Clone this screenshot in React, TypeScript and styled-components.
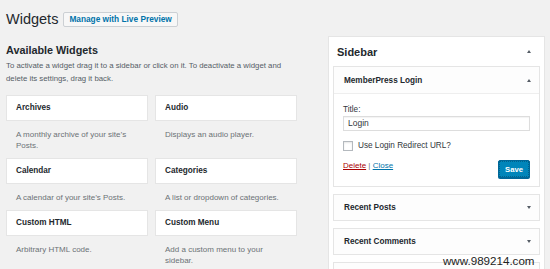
import React from "react";
import styled, { createGlobalStyle } from "styled-components";

const GlobalStyle = createGlobalStyle`
  html, body {
    margin: 0;
    background: #f1f1f1;
    font-family: "Liberation Sans", Arial, Helvetica, sans-serif;
    color: #23282d;
  }
`;

const Page = styled.div`
  position: relative;
  display: flex;
  align-items: flex-start;
  box-sizing: border-box;
  height: 269px;
  padding: 10px 5px 0 6px;
  overflow: hidden;
`;

const LeftColumn = styled.div`
  width: 291px;
  flex-shrink: 0;
`;

const HeaderRow = styled.div`
  display: flex;
  align-items: center;
  gap: 5px;
  height: 18px;
`;

const PageTitle = styled.h1`
  margin: 0;
  font-size: 14.5px;
  font-weight: 400;
  line-height: 18px;
  color: #23282d;
`;

const ManageButton = styled.button`
  box-sizing: border-box;
  height: 15px;
  padding: 0 5px;
  border: 1px solid #ccd0d4;
  border-radius: 2px;
  background: #f7f7f7;
  color: #0073aa;
  font-family: inherit;
  font-size: 8.3px;
  font-weight: 700;
  line-height: 13px;
`;

const SectionTitle = styled.h2`
  margin: 15px 0 0;
  font-size: 10.8px;
  font-weight: 700;
  line-height: 14px;
  color: #23282d;
`;

const Intro = styled.p`
  margin: 2px 0 9px;
  font-size: 7.8px;
  line-height: 13.3px;
  color: #555d66;
`;

const WidgetGrid = styled.div`
  display: grid;
  grid-template-columns: 142px 142px;
  column-gap: 7px;
`;

const WidgetCard = styled.div`
  box-sizing: border-box;
  height: 26px;
  padding: 0 9px;
  border: 1px solid #e5e5e5;
  background: #fff;
  font-size: 8.2px;
  font-weight: 700;
  line-height: 24px;
  color: #23282d;
`;

const WidgetDesc = styled.div`
  padding: 8px 10px 7px;
  font-size: 8px;
  line-height: 11px;
  color: #6c7176;
`;

const SidebarPanel = styled.section`
  box-sizing: border-box;
  width: 217px;
  margin: 26px 0 0 31px;
  flex-shrink: 0;
  border: 1px solid #e5e5e5;
  background: #fff;
`;

const PanelHeader = styled.div`
  display: flex;
  align-items: center;
  justify-content: space-between;
  height: 29px;
  padding: 0 13px 0 8px;
`;

const PanelTitle = styled.h3`
  margin: 0;
  font-size: 11px;
  font-weight: 700;
  color: #23282d;
`;

const PanelBody = styled.div`
  display: flex;
  flex-direction: column;
  gap: 7px;
  padding: 0 4px;
`;

const WidgetBox = styled.div`
  box-sizing: border-box;
  border: 1px solid #e5e5e5;
  background: #fdfdfd;
`;

const WidgetBoxHeader = styled.div<{ $open?: boolean }>`
  display: flex;
  align-items: center;
  justify-content: space-between;
  height: ${(p) => (p.$open ? "26px" : "25px")};
  padding: 0 8px 0 10px;
  border-bottom: ${(p) => (p.$open ? "1px solid #eee" : "none")};
  font-size: 8.2px;
  font-weight: 700;
  color: #23282d;
`;

const Arrow = styled.span<{ $up?: boolean }>`
  width: 0;
  height: 0;
  border-left: 2.5px solid transparent;
  border-right: 2.5px solid transparent;
  ${(p) =>
    p.$up ? "border-bottom: 3px solid #555d66;" : "border-top: 3px solid #555d66;"}
`;

const WidgetForm = styled.div`
  padding: 10px 9px 8px;
  background: #fff;
`;

const FieldLabel = styled.label`
  display: block;
  font-size: 8.2px;
  line-height: 11px;
  color: #32373c;
`;

const TextInput = styled.div`
  box-sizing: border-box;
  height: 15px;
  margin-top: 1px;
  padding: 0 4px;
  border: 1px solid #ddd;
  box-shadow: inset 0 1px 1px rgba(0, 0, 0, 0.05);
  background: #fff;
  font-size: 8.5px;
  line-height: 13px;
  color: #32373c;
`;

const CheckRow = styled.div`
  display: flex;
  align-items: center;
  gap: 5px;
  margin-top: 9px;
  font-size: 8.2px;
  line-height: 11px;
  color: #32373c;
`;

const CheckBox = styled.span`
  box-sizing: border-box;
  width: 10px;
  height: 10px;
  border: 1px solid #b4b9be;
  box-shadow: inset 0 1px 2px rgba(0, 0, 0, 0.1);
  background: #fff;
`;

const ActionRow = styled.div`
  display: flex;
  align-items: flex-start;
  justify-content: space-between;
  margin-top: 9px;
`;

const Links = styled.div`
  font-size: 8px;
  line-height: 11px;
  color: #72777c;
`;

const ActionLink = styled.a<{ $danger?: boolean }>`
  color: ${(p) => (p.$danger ? "#a00" : "#0073aa")};
  text-decoration: underline;
`;

const SaveButton = styled.button`
  box-sizing: border-box;
  width: 32px;
  height: 18px;
  padding: 0;
  border: 1px solid #006799;
  border-radius: 2px;
  background: #0085ba;
  box-shadow: 0 1px 0 #006799;
  outline: 1px dotted rgba(0, 0, 0, 0.25);
  outline-offset: -2px;
  color: #fff;
  font-family: inherit;
  font-size: 7.7px;
  font-weight: 700;
`;

const Watermark = styled.div`
  position: absolute;
  left: 443px;
  top: 254px;
  font-size: 11.6px;
  line-height: 14px;
  color: #222;
`;

const widgets = [
  { title: "Archives", desc: "A monthly archive of your site’s Posts." },
  { title: "Audio", desc: "Displays an audio player." },
  { title: "Calendar", desc: "A calendar of your site’s Posts." },
  { title: "Categories", desc: "A list or dropdown of categories." },
  { title: "Custom HTML", desc: "Arbitrary HTML code." },
  { title: "Custom Menu", desc: "Add a custom menu to your sidebar." },
];

// the last box is only partly in view, its title falls below the fold
const closedWidgets = ["Recent Posts", "Recent Comments", ""];

function App() {
  return (
    <>
      <GlobalStyle />
      <Page>
        <LeftColumn>
          <HeaderRow>
            <PageTitle>Widgets</PageTitle>
            <ManageButton>Manage with Live Preview</ManageButton>
          </HeaderRow>
          <SectionTitle>Available Widgets</SectionTitle>
          <Intro>
            To activate a widget drag it to a sidebar or click on it. To deactivate a widget
            and delete its settings, drag it back.
          </Intro>
          <WidgetGrid>
            {widgets.map((w) => (
              <div key={w.title}>
                <WidgetCard>{w.title}</WidgetCard>
                <WidgetDesc>{w.desc}</WidgetDesc>
              </div>
            ))}
          </WidgetGrid>
        </LeftColumn>

        <SidebarPanel>
          <PanelHeader>
            <PanelTitle>Sidebar</PanelTitle>
            <Arrow $up />
          </PanelHeader>
          <PanelBody>
            <WidgetBox>
              <WidgetBoxHeader $open>
                MemberPress Login
                <Arrow $up />
              </WidgetBoxHeader>
              <WidgetForm>
                <FieldLabel>Title:</FieldLabel>
                <TextInput>Login</TextInput>
                <CheckRow>
                  <CheckBox />
                  Use Login Redirect URL?
                </CheckRow>
                <ActionRow>
                  <Links>
                    <ActionLink $danger>Delete</ActionLink> | <ActionLink>Close</ActionLink>
                  </Links>
                  <SaveButton>Save</SaveButton>
                </ActionRow>
              </WidgetForm>
            </WidgetBox>
            {closedWidgets.map((name, i) => (
              <WidgetBox key={i}>
                <WidgetBoxHeader>
                  {name}
                  {name && <Arrow />}
                </WidgetBoxHeader>
              </WidgetBox>
            ))}
          </PanelBody>
        </SidebarPanel>

        <Watermark>www.989214.com</Watermark>
      </Page>
    </>
  );
}

export default App;
